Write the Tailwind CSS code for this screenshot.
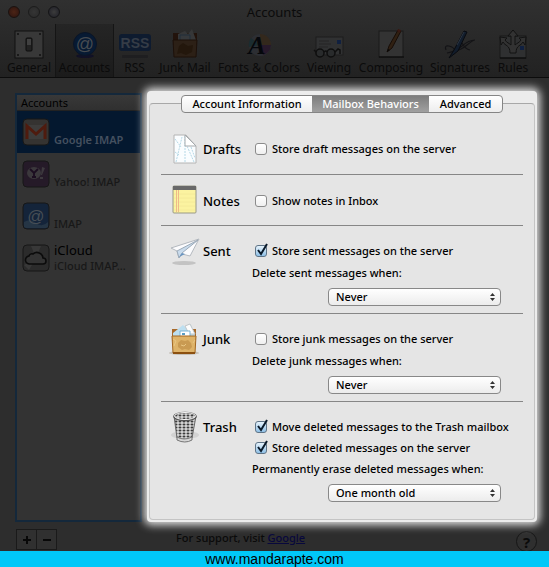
<!DOCTYPE html>
<html lang="en">
<head>
  <meta charset="UTF-8">
  <meta name="viewport" content="width=device-width, initial-scale=1.0">
  <title>Accounts</title>
  <script src="https://cdn.jsdelivr.net/npm/@tailwindcss/browser@4"></script>
</head>
<body class="min-h-screen flex flex-col bg-[#2d2d2d] font-['Noto_Sans','Open_Sans',sans-serif] text-[11px] leading-4 text-black">

  <!-- title bar and toolbar -->
  <header class="bg-linear-to-b from-[#303030] to-[#222222] border-b border-[#0c0c0c] text-[#0b0b0b]">
    <div class="relative flex items-center h-6 px-2">
      <div class="flex gap-2">
        <button type="button" aria-label="Close" class="size-3 rounded-full border border-[#1b1210] bg-radial from-[#4c2416] to-[#2c140f]"></button>
        <button type="button" aria-label="Minimize" class="size-3 rounded-full border border-[#1c1c1c] bg-radial from-[#353535] to-[#292929]"></button>
        <button type="button" aria-label="Zoom" class="size-3 rounded-full border border-[#141416] bg-radial from-[#3c3c3c] to-[#1e1e26]"></button>
      </div>
      <h1 class="absolute inset-x-0 text-center text-[13px] pointer-events-none">Accounts</h1>
    </div>
    <nav class="flex h-[53px] pl-[3px] text-[12px] whitespace-nowrap">
      <button type="button" class="w-[52px] flex flex-col items-center pt-1">
        <svg class="size-8 shrink-0" viewBox="0 0 32 32">
          <rect x="2" y="3" width="28" height="27" fill="#383838" stroke="#111"/>
          <rect x="13" y="10" width="6" height="13" rx="1" fill="#222" stroke="#0c0c0c"/>
          <rect x="14" y="11" width="4" height="6" fill="#404040"/>
          <g fill="#111"><circle cx="5" cy="6" r="1"/><circle cx="27" cy="6" r="1"/><circle cx="5" cy="27" r="1"/><circle cx="27" cy="27" r="1"/></g>
        </svg>
        <span>General</span>
      </button>
      <button type="button" class="w-[59px] flex flex-col items-center pt-1 bg-linear-to-b from-[#252525] to-[#1b1b1b] border-x border-[#151515]">
        <svg class="size-8 shrink-0" viewBox="0 0 32 32">
          <ellipse cx="16" cy="28" rx="9" ry="2" fill="#111126"/>
          <circle cx="16" cy="16" r="11.500" fill="#071a33" stroke="#0b1526"/>
          <text x="16" y="22" text-anchor="middle" font-family="Liberation Sans" font-size="18" fill="#464b50">@</text>
        </svg>
        <span>Accounts</span>
      </button>
      <button type="button" class="w-[41px] flex flex-col items-center pt-1">
        <svg class="size-8 shrink-0" viewBox="0 0 32 32">
          <rect x="0" y="6" width="32" height="17" rx="3" fill="#0e1b2f"/>
          <rect x="3" y="27" width="26" height="3" rx="1" fill="#1e1e20"/>
          <text x="16" y="20" text-anchor="middle" font-family="Liberation Sans" font-weight="bold" font-size="14" fill="#353c46">RSS</text>
        </svg>
        <span>RSS</span>
      </button>
      <button type="button" class="w-[60px] flex flex-col items-center pt-1">
        <svg class="size-8 shrink-0" viewBox="0 0 32 32">
          <path d="M4 5h24v12H4z" fill="#22130c"/>
          <path d="M9 6l7-3 3 3 4-5 4 11-4 3H9z" fill="#363738"/>
          <path d="M11 7h10v7H11z" fill="#36393c" stroke="#202e3b"/>
          <path d="M4 12h24l-1 17H5z" fill="#2c2016" stroke="#1d1009"/>
          <path d="M10 18l4-3 5 3 5-1-1 7-6 3-5-2-4 1z" fill="#23170c"/>
        </svg>
        <span>Junk Mail</span>
      </button>
      <button type="button" class="w-[88px] flex flex-col items-center pt-1">
        <svg class="size-8 shrink-0" viewBox="0 0 32 32">
          <circle cx="17" cy="17" r="11" fill="#2c2e33"/>
          <path d="M17 17V6a11 11 0 0 1 11 11z" fill="#33281c"/>
          <path d="M17 17h11a11 11 0 0 1-8 10z" fill="#27192a"/>
          <path d="M17 17L6 19a11 11 0 0 1 2-9z" fill="#1b2c30"/>
          <text x="14" y="26" text-anchor="middle" font-family="Liberation Serif" font-style="italic" font-weight="bold" font-size="26" fill="#05070b">A</text>
        </svg>
        <span>Fonts &amp; Colors</span>
      </button>
      <button type="button" class="w-[52px] flex flex-col items-center pt-1">
        <svg class="size-8 shrink-0" viewBox="0 0 32 32">
          <rect x="3" y="9" width="27" height="18" fill="#303132" stroke="#1d1d1d"/>
          <path d="M6 13h10M6 16h12M6 19h9" stroke="#242424"/>
          <rect x="24" y="12" width="4" height="4" fill="#102040"/>
          <g fill="#292b2c" stroke="#0f0f0f" stroke-width="1.500"><circle cx="7" cy="25" r="4"/><circle cx="18" cy="25" r="4"/></g>
          <path d="M11 24q2-2 3 0M22 24l3-3 2 1v4M3 24l-2-2" fill="none" stroke="#0f0f0f" stroke-width="1.500"/>
        </svg>
        <span>Viewing</span>
      </button>
      <button type="button" class="w-[72px] flex flex-col items-center pt-1">
        <svg class="size-8 shrink-0" viewBox="0 0 32 32">
          <rect x="4" y="3" width="24" height="26" fill="#333" stroke="#1a1a1a"/>
          <path d="M4 29h25" stroke="#080808"/>
          <path d="M12 24l2-6L23 2l3 1-9 17z" fill="#302012" stroke="#170d07"/>
          <path d="M22 3l1-2 3 1-1 3z" fill="#381913"/>
          <path d="M12 24l1-3 2 1z" fill="#080808"/>
        </svg>
        <span>Composing</span>
      </button>
      <button type="button" class="w-[66px] flex flex-col items-center pt-1">
        <svg class="size-8 shrink-0" viewBox="0 0 32 32">
          <path d="M2 22q-2-5 3-4t6 5q6-1 12-6t8-5q-6 0-13 6T3 25M18 15q3 6 8 7" fill="none" stroke="#131316" stroke-width="1.200"/>
          <path d="M5 30l5-8L20 3l3 1-9 19z" fill="#111c2b" stroke="#090b10"/>
          <path d="M13 17l7-13" stroke="#2b3542"/>
        </svg>
        <span>Signatures</span>
      </button>
      <button type="button" class="w-[40px] flex flex-col items-center pt-1">
        <svg class="size-8 shrink-0" viewBox="0 0 32 32">
          <rect x="3" y="8" width="26" height="22" fill="#2f3031" stroke="#191919"/>
          <rect x="23" y="18" width="4" height="4" fill="#102040"/>
          <path d="M13 25c0-8-5-7-7-11l-2 3-1-8 7 1-2 2c2 3 4 3 6 5V8h-3l5-6 5 6h-3v9c2-2 4-2 6-5l-2-2 7-1-1 8-2-3c-2 4-7 3-7 11z" fill="#323232" stroke="#121212"/>
          <path d="M3 30h26" stroke="#080808"/>
        </svg>
        <span>Rules</span>
      </button>
    </nav>
  </header>

  <main class="flex gap-[5px] pt-[13px] pl-[15px] pr-3">
    <!-- account list -->
    <aside class="w-[127px] shrink-0 mt-[2px] border-2 border-[#14283b] bg-[#333333]">
      <h2 class="h-4 pl-1 bg-linear-to-b from-[#383838] to-[#303030] border-b border-[#222222]">Accounts</h2>
      <ul class="text-[#181818] font-medium">
        <li class="flex items-center gap-1 h-[42px] pl-[5px] bg-[#04182f] text-[#44505f] font-semibold">
          <svg class="size-7 shrink-0" viewBox="0 0 28 28">
            <rect x="1" y="1" width="26" height="26" rx="4" fill="#353331" stroke="#171717"/>
            <rect x="4" y="7" width="20" height="14" rx="1" fill="#3d3c3b"/>
            <path d="M5 21V8l9 8 9-8v13" fill="none" stroke="#4f1b0e" stroke-width="3"/>
          </svg>
          <span class="pt-4">Google IMAP</span>
        </li>
        <li class="flex items-center gap-1 h-[42px] pl-[5px]">
          <svg class="size-7 shrink-0" viewBox="0 0 28 28">
            <rect x="1" y="1" width="26" height="26" rx="4" fill="#251a28" stroke="#171717"/>
            <ellipse cx="12" cy="13" rx="7" ry="6" fill="#3b383c"/>
            <path d="M8 9l4 4 4-4M12 13v4M10 17h4" fill="none" stroke="#1b0d20" stroke-width="1.800"/>
            <path d="M20 7l3 1-3 7h-1zM18 17h3v2h-3z" fill="#3d393e"/>
          </svg>
          <span class="pt-4">Yahoo! IMAP</span>
        </li>
        <li class="flex items-center gap-1 h-[42px] pl-[5px]">
          <svg class="size-7 shrink-0" viewBox="0 0 28 28">
            <rect x="1" y="1" width="26" height="26" rx="4" fill="#14243a" stroke="#171717"/>
            <path d="M2 20q6-4 12 1t12-1v5l-2 1H4l-2-1z" fill="#253545"/>
            <text x="14" y="20" text-anchor="middle" font-family="Liberation Sans" font-size="17" fill="#474e55">@</text>
          </svg>
          <span class="pt-4">IMAP</span>
        </li>
        <li class="flex items-center gap-1 h-[42px] pl-[5px]">
          <svg class="size-7 shrink-0" viewBox="0 0 28 28">
            <rect x="1" y="1" width="26" height="26" rx="4" fill="#2b2b2b" stroke="#171717"/>
            <path d="M9 2h10l-5 12zM2 21l12-7-7 12z" fill="#383838"/>
            <path d="M8 20a4 4 0 0 1-1-8 3 3 0 0 1 4-2 6 6 0 0 1 10 4 3 3 0 0 1 0 6z" fill="#333" stroke="#0b0b0b" stroke-width="1.600"/>
          </svg>
          <div class="min-w-0">
            <div class="text-[13px] text-black leading-4 font-normal">iCloud</div>
            <div class="leading-4 whitespace-nowrap">iCloud IMAP...</div>
          </div>
        </li>
      </ul>
    </aside>

    <!-- mailbox behaviors -->
    <section class="relative z-10 flex-1 min-w-0 rounded-sm bg-[#ececec] px-[2px] pt-1 pb-[2px] shadow-[0_0_8px_3px_#e4e4e4]">
      <div role="tablist" class="relative flex w-fit mx-auto h-[18px] -mb-[10px] rounded border border-[#858585] overflow-hidden bg-linear-to-b from-white to-[#ededed] font-medium">
        <button type="button" role="tab" class="w-[130px]">Account Information</button>
        <button type="button" role="tab" aria-selected="true" class="w-[117px] bg-linear-to-b from-[#7d7d7d] to-[#a0a0a0] text-white">Mailbox Behaviors</button>
        <button type="button" role="tab" class="w-[73px]">Advanced</button>
      </div>

      <div class="rounded border border-[#c4c4c4] border-t-[#a8a8a8] bg-[#e5e5e5] px-[11px] pt-[21px] pb-[17px] font-medium">
        <div class="flex pt-4 h-[50px] border-b border-[#868686]">
          <div class="w-[42px] shrink-0 pl-[9px]">
            <svg class="size-8 -mt-2" viewBox="0 0 32 32">
              <path d="M4 2h12l10 11v17H4z" fill="#fafdff" stroke="#b4b4b4"/>
              <path d="M15 3v26M6 29l6-25M24 29L17 13M5 6l6 8M5 19l4 3M21 14l4 11" stroke="#b5d8e6" stroke-dasharray="2 1" fill="none"/>
              <path d="M15 2v11h11z" fill="#fff" stroke="#a5aaad"/>
            </svg>
          </div>
          <h3 class="w-[52px] shrink-0 text-[13px]">Drafts</h3>
          <label class="flex items-center gap-[5px] h-4">
            <input type="checkbox" class="appearance-none size-3 rounded-[3px] border border-[#8b8b8b] bg-linear-to-b from-white to-[#efefef]">
            Store draft messages on the server
          </label>
        </div>

        <div class="flex pt-[18px] h-[51px] border-b border-[#868686]">
          <div class="w-[42px] shrink-0 pl-[9px]">
            <svg class="size-8 -mt-[10px]" viewBox="0 0 32 32">
              <rect x="3" y="3" width="23" height="27" rx="1" fill="#fbf3a0" stroke="#999987"/>
              <path d="M3 3h23v4H3z" fill="#686868"/>
              <path d="M4 11h21M4 15h21M4 19h21M4 23h21M4 27h21" stroke="#f4ea98"/>
              <path d="M6.500 7v22M8.500 7v22" stroke="#efb98a"/>
            </svg>
          </div>
          <h3 class="w-[52px] shrink-0 text-[13px]">Notes</h3>
          <label class="flex items-center gap-[5px] h-4">
            <input type="checkbox" class="appearance-none size-3 rounded-[3px] border border-[#8b8b8b] bg-linear-to-b from-white to-[#efefef]">
            Show notes in Inbox
          </label>
        </div>

        <div class="flex pt-[17px] h-[88px] border-b border-[#868686]">
          <div class="w-[42px] shrink-0 pl-[9px]">
            <svg class="size-8 -mt-[7px]" viewBox="0 0 32 32">
              <ellipse cx="14" cy="27" rx="12" ry="2" fill="#c3c3c3"/>
              <path d="M1 12L29 3 20 20l-8-2-3 4-2-7z" fill="#fbfbfd" stroke="#b4b9bf"/>
              <path d="M7 15L28 4 12 17l-3 5z" fill="#c9dbec" stroke="#9caab8"/>
              <path d="M9 21l3-4 3 1z" fill="#6794c1"/>
            </svg>
          </div>
          <h3 class="w-[52px] shrink-0 text-[13px]">Sent</h3>
          <div class="flex-1 min-w-0">
            <label class="flex items-center gap-[5px] h-4">
              <span class="relative flex">
                <input type="checkbox" checked class="appearance-none size-3 rounded-[3px] border border-[#5f7487] bg-linear-to-b from-[#e6f3fc] to-[#8fc0e6]">
                <svg class="absolute bottom-0 left-0 size-[14px] pointer-events-none" viewBox="0 0 14 14"><path d="M3 7l3 4 6-10" fill="none" stroke="#0a1a2a" stroke-width="2"/></svg>
              </span>
              Store sent messages on the server
            </label>
            <label for="sent-when" class="block -ml-[3px] mt-[6px]">Delete sent messages when:</label>
            <div class="relative w-[173px] mt-[7px] ml-[73px]">
              <select id="sent-when" class="block appearance-none w-full h-[18px] pl-[7px] rounded border border-[#888888] bg-linear-to-b from-white to-[#ececec] leading-4">
                <option>Never</option>
              </select>
              <svg class="absolute right-[6px] top-[4px] w-[5px] h-[10px] pointer-events-none" viewBox="0 0 5 10"><path d="M2.500 1L5 4H0zM2.500 9L5 6H0z" fill="#333"/></svg>
            </div>
          </div>
        </div>

        <div class="flex pt-[17px] h-[88px] border-b border-[#868686]">
          <div class="w-[42px] shrink-0 pl-[7px]">
            <svg class="size-8 -mt-2" viewBox="0 0 32 32">
              <ellipse cx="16" cy="30" rx="15" ry="2" fill="#c5c0b8"/>
              <path d="M4 6h24v12H4z" fill="#a86a2a"/>
              <path d="M5 10l10-8 5 5 3-5 4 10v4H5z" fill="#bddff0"/>
              <path d="M17 3l5-2 5 10h-6z" fill="#fcfcfc" stroke="#bfc5c8"/>
              <path d="M12 8h10v6H12z" fill="#fff" stroke="#7ab4d5"/>
              <path d="M14 10h3v2h-3z" fill="#5a9dc4"/>
              <path d="M4 13h24l-1 17H5z" fill="#deb369" stroke="#a36721"/>
              <path d="M10 20l3-3 4 1 3-1 3 3 1 4-3 3-4-1-3 1-4-3z" fill="#c99a52"/>
              <path d="M5 16l3 2-2 5M27 17l-2 3M13 22l3 1 2-2" fill="none" stroke="#e9c683"/>
              <path d="M5 30h22" stroke="#8c5010" stroke-width="2"/>
            </svg>
          </div>
          <h3 class="w-[52px] shrink-0 text-[13px]">Junk</h3>
          <div class="flex-1 min-w-0">
            <label class="flex items-center gap-[5px] h-4">
              <input type="checkbox" class="appearance-none size-3 rounded-[3px] border border-[#8b8b8b] bg-linear-to-b from-white to-[#efefef]">
              Store junk messages on the server
            </label>
            <label for="junk-when" class="block -ml-[3px] mt-[6px]">Delete junk messages when:</label>
            <div class="relative w-[173px] mt-[7px] ml-[73px]">
              <select id="junk-when" class="block appearance-none w-full h-[18px] pl-[7px] rounded border border-[#888888] bg-linear-to-b from-white to-[#ececec] leading-4">
                <option>Never</option>
              </select>
              <svg class="absolute right-[6px] top-[4px] w-[5px] h-[10px] pointer-events-none" viewBox="0 0 5 10"><path d="M2.500 1L5 4H0zM2.500 9L5 6H0z" fill="#333"/></svg>
            </div>
          </div>
        </div>

        <div class="flex pt-[17px]">
          <div class="w-[42px] shrink-0 pl-[9px]">
            <svg class="size-8 -mt-2" viewBox="0 0 32 32">
              <defs>
                <pattern id="mesh" width="4" height="3" patternUnits="userSpaceOnUse">
                  <rect width="4" height="3" fill="#d8d8d8"/>
                  <ellipse cx="2" cy="1.500" rx="1.500" ry="1" fill="#3c3c3c"/>
                </pattern>
              </defs>
              <ellipse cx="15" cy="24" rx="14" ry="4" fill="#d2d2d2"/>
              <path d="M4 5l3 22q7 6 15 0l4-22z" fill="url(#mesh)" stroke="#666"/>
              <path d="M7 26q7 4 15 0v3q-7 4-15 0z" fill="#d6d6d6" stroke="#777"/>
              <ellipse cx="15" cy="5.500" rx="11" ry="4" fill="url(#mesh)" stroke="#555" stroke-width="1.500"/>
              <ellipse cx="15" cy="5" rx="10.500" ry="3.500" fill="none" stroke="#f6f6f6"/>
            </svg>
          </div>
          <h3 class="w-[52px] shrink-0 text-[13px]">Trash</h3>
          <div class="flex-1 min-w-0">
            <label class="flex items-center gap-[5px] h-4">
              <span class="relative flex">
                <input type="checkbox" checked class="appearance-none size-3 rounded-[3px] border border-[#5f7487] bg-linear-to-b from-[#e6f3fc] to-[#8fc0e6]">
                <svg class="absolute bottom-0 left-0 size-[14px] pointer-events-none" viewBox="0 0 14 14"><path d="M3 7l3 4 6-10" fill="none" stroke="#0a1a2a" stroke-width="2"/></svg>
              </span>
              <span class="whitespace-nowrap">Move deleted messages to the Trash mailbox</span>
            </label>
            <label class="flex items-center gap-[5px] h-4 mt-[5px]">
              <span class="relative flex">
                <input type="checkbox" checked class="appearance-none size-3 rounded-[3px] border border-[#5f7487] bg-linear-to-b from-[#e6f3fc] to-[#8fc0e6]">
                <svg class="absolute bottom-0 left-0 size-[14px] pointer-events-none" viewBox="0 0 14 14"><path d="M3 7l3 4 6-10" fill="none" stroke="#0a1a2a" stroke-width="2"/></svg>
              </span>
              Store deleted messages on the server
            </label>
            <label for="trash-when" class="block -ml-[3px] mt-[5px]">Permanently erase deleted messages when:</label>
            <div class="relative w-[173px] mt-[7px] ml-[73px]">
              <select id="trash-when" class="block appearance-none w-full h-[18px] pl-[7px] rounded border border-[#888888] bg-linear-to-b from-white to-[#ececec] leading-4">
                <option>One month old</option>
              </select>
              <svg class="absolute right-[6px] top-[4px] w-[5px] h-[10px] pointer-events-none" viewBox="0 0 5 10"><path d="M2.500 1L5 4H0zM2.500 9L5 6H0z" fill="#333"/></svg>
            </div>
          </div>
        </div>
      </div>
    </section>
  </main>

  <div class="flex items-start flex-1 pt-[7px] pl-4 pr-3 text-[#0a0a0a]">
    <div class="flex h-[21px] w-[160px]">
      <button type="button" aria-label="Add account" class="w-[21px] border border-[#1a1a1a] bg-[#303030] flex items-center justify-center">
        <svg class="size-2" viewBox="0 0 8 8"><path d="M4 0v8M0 4h8" stroke="#080808" stroke-width="2"/></svg>
      </button>
      <button type="button" aria-label="Remove account" class="w-[21px] -ml-px border border-[#1a1a1a] bg-[#303030] flex items-center justify-center">
        <svg class="size-2" viewBox="0 0 8 8"><path d="M0 4h8" stroke="#080808" stroke-width="2"/></svg>
      </button>
    </div>
    <p class="pt-px font-medium">For support, visit <a href="#" class="underline text-[#08083c]">Google</a></p>
    <button type="button" aria-label="Help" class="ml-auto mt-[2px] -mb-1 size-[21px] shrink-0 rounded-full border border-[#161616] bg-[#2f2f2f] text-[15px] leading-4 font-bold">?</button>
  </div>

  <footer class="relative shrink-0 h-4 bg-[#00c8f8] text-center font-['Liberation_Sans',sans-serif] text-[14px] leading-4">www.mandarapte.com</footer>
</body>
</html>
